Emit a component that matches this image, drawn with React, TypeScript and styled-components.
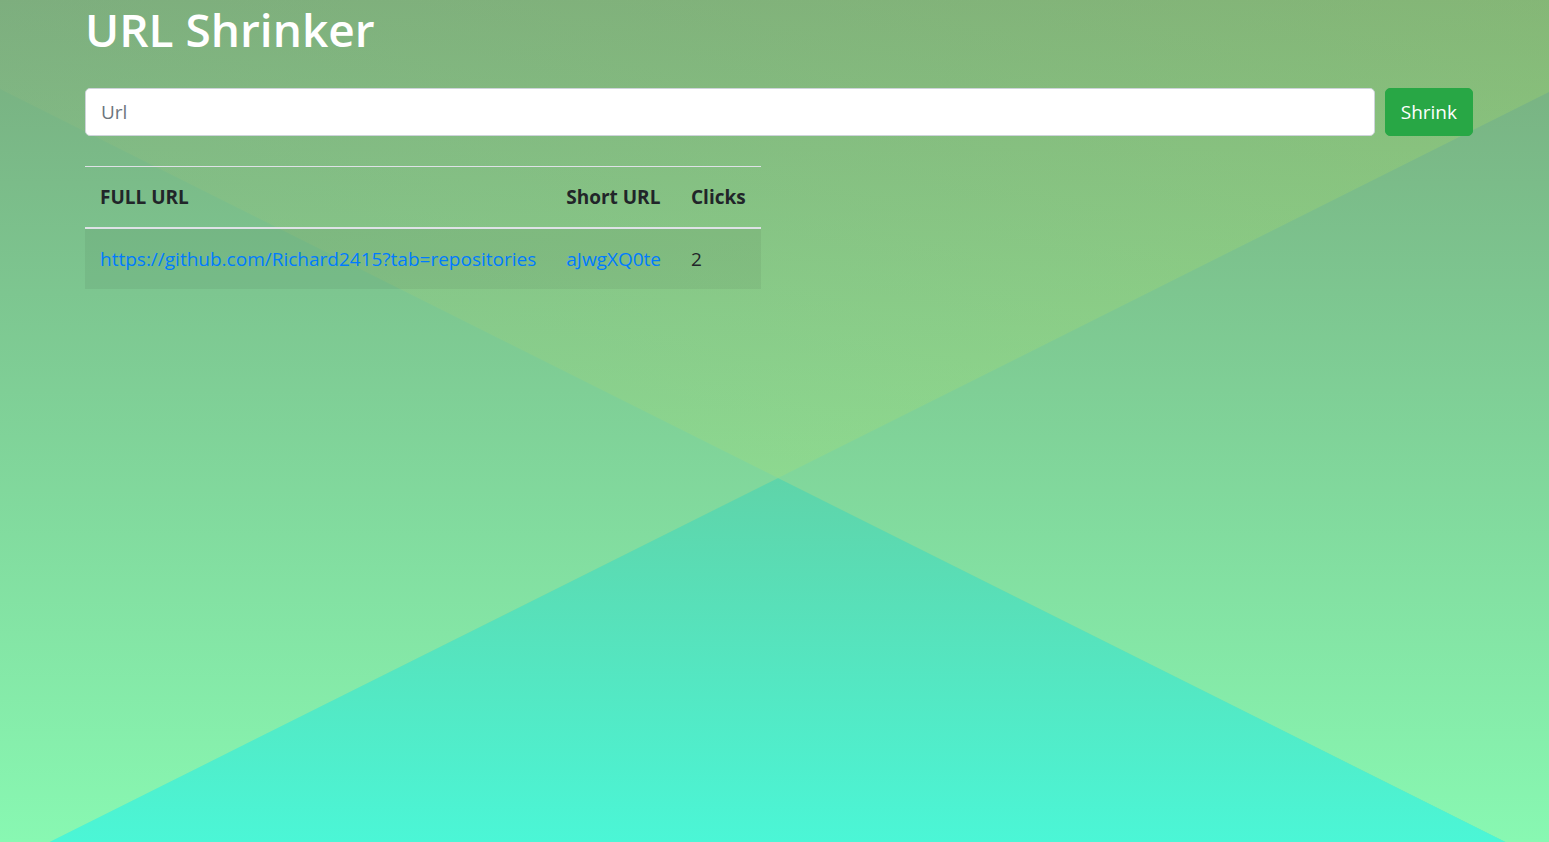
import React from "react";
import styled, { createGlobalStyle } from "styled-components";

const GlobalStyle = createGlobalStyle`
  html, body {
    margin: 0;
    padding: 0;
  }
  body {
    font-family: "Open Sans", "Noto Sans", "Liberation Sans", sans-serif;
    color: #212529;
  }
  * { box-sizing: border-box; }
`;

const Page = styled.div`
  position: relative;
  height: 100vh;
  overflow: hidden;
  background:
    linear-gradient(to right, rgba(120, 165, 135, 0.25), rgba(150, 200, 105, 0.25)),
    linear-gradient(to bottom, #7fb17b 0%, #8fe498 56.77%, #8fe498 100%);

  &::before,
  &::after {
    content: "";
    position: absolute;
    inset: 0;
    z-index: 0;
  }

  /* left + right triangles of the X */
  &::before {
    background: linear-gradient(to bottom, #79b383 10%, #88f8b2 100%);
    clip-path: polygon(0 10.57%, 50.23% 56.77%, 100% 10.93%, 100% 102.6%, 50.23% 56.77%, 0 103%);
  }

  /* bottom triangle */
  &::after {
    background: linear-gradient(to bottom, #5fd4a9 56.77%, #4bf6d6 100%);
    clip-path: polygon(50.23% 56.77%, 97.2% 100%, 3.2% 100%);
  }
`;

const Content = styled.main`
  position: relative;
  z-index: 1;
  padding: 0 76px 0 85px;
`;

const Title = styled.h1`
  margin: 0;
  font-size: 46px;
  font-weight: 600;
  line-height: 58px;
  color: #ffffff;
`;

const ShrinkForm = styled.form`
  display: flex;
  gap: 10px;
  margin-top: 30px;
`;

const UrlInput = styled.input`
  flex: 1;
  height: 48px;
  padding: 7.5px 15px;
  font-family: inherit;
  font-size: 19px;
  line-height: 1.5;
  color: #495057;
  background: #ffffff;
  border: 1px solid #ced4da;
  border-radius: 5px;
  outline: none;

  &::placeholder {
    color: #6c757d;
  }
`;

const ShrinkButton = styled.button`
  height: 48px;
  padding: 7.5px 15px;
  font-family: inherit;
  font-size: 19px;
  line-height: 1.5;
  color: #ffffff;
  background: #28a745;
  border: 1px solid #28a745;
  border-radius: 5px;
  cursor: pointer;
`;

const LinksTable = styled.table`
  margin-top: 30px;
  border-collapse: collapse;
  font-size: 19px;
  line-height: 30px;
`;

const HeadCell = styled.th`
  padding: 15px;
  text-align: left;
  font-weight: 700;
  color: #212529;
  border-top: 1px solid #dee2e6;
  border-bottom: 2px solid #dee2e6;
`;

const BodyRow = styled.tr`
  background: rgba(0, 0, 0, 0.05);
`;

const Cell = styled.td`
  padding: 15px;
  color: #212529;
`;

const CellLink = styled.a`
  color: #007bff;
  text-decoration: none;
`;

export default function App() {
  return (
    <>
      <GlobalStyle />
      <Page>
        <Content>
          <Title>URL Shrinker</Title>
          <ShrinkForm onSubmit={(e) => e.preventDefault()}>
            <UrlInput type="url" placeholder="Url" />
            <ShrinkButton type="submit">Shrink</ShrinkButton>
          </ShrinkForm>
          <LinksTable>
            <thead>
              <tr>
                <HeadCell>FULL URL</HeadCell>
                <HeadCell>Short URL</HeadCell>
                <HeadCell>Clicks</HeadCell>
              </tr>
            </thead>
            <tbody>
              <BodyRow>
                <Cell>
                  <CellLink href="#">https://github.com/Richard2415?tab=repositories</CellLink>
                </Cell>
                <Cell>
                  <CellLink href="#">aJwgXQ0te</CellLink>
                </Cell>
                <Cell>2</Cell>
              </BodyRow>
            </tbody>
          </LinksTable>
        </Content>
      </Page>
    </>
  );
}
